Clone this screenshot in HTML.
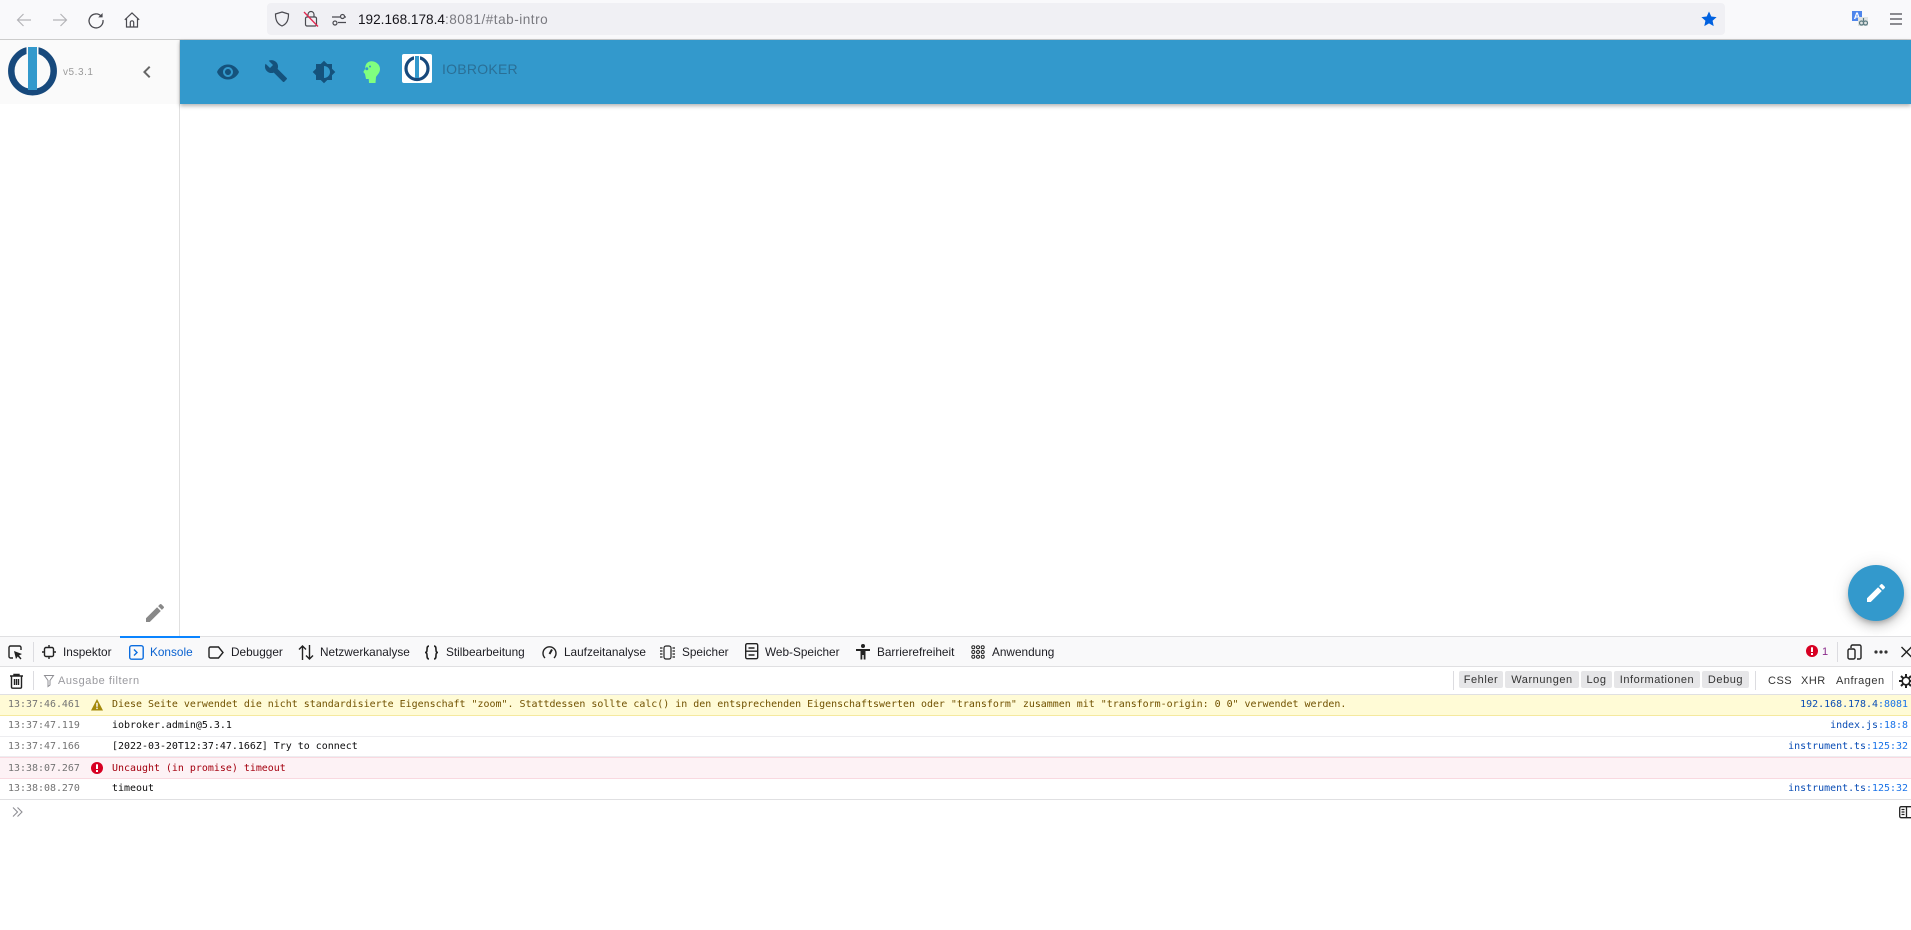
<!DOCTYPE html>
<html><head><meta charset="utf-8"><style>
html,body{margin:0;padding:0;background:#fff;width:1911px;height:930px;overflow:hidden}
body{position:relative;font-family:"Liberation Sans",sans-serif}
.a{position:absolute}
svg{position:absolute;overflow:visible}
.t{position:absolute;top:644px;font-size:11.8px;line-height:16px;color:#1c1c22;white-space:nowrap}
.f{position:absolute;top:671px;height:17px;background:#e6e6e8;border-radius:2px;font-size:11px;line-height:19px;color:#333;text-align:center;letter-spacing:.55px}
.g{position:absolute;top:673px;font-size:11px;line-height:16px;color:#333;letter-spacing:.5px;white-space:nowrap}
.s{position:absolute;width:1px;background:#dcdce0}
.r{position:absolute;left:0;width:1911px;height:20px;border-bottom:1px solid #ededf0;font-family:"DejaVu Sans Mono","Liberation Mono",monospace;font-size:9.96px;line-height:20px;white-space:pre}
.r b{font-weight:normal;position:absolute;left:8px;top:0;color:#737373}
.r i{font-style:normal;position:absolute;left:112px;top:0;color:#0c0c0d}
.r u{text-decoration:none;position:absolute;right:3px;top:0;color:#0a4db5}
.r u em{font-style:normal;color:#1a73e8}
</style></head><body>
<!-- browser toolbar -->
<div class="a" style="left:0;top:0;width:1911px;height:39px;background:#f9f9fb;border-bottom:1px solid #ccc;box-sizing:content-box"></div>
<div class="a" style="left:267px;top:3px;width:1458px;height:32px;background:#f0f0f4;border-radius:4px"></div>
<svg style="left:16px;top:12px" width="16" height="16" fill="none" stroke="#b4b4b8" stroke-width="1.2"><path d="M15 8H1.5M7.5 2L1.5 8l6 6"/></svg>
<svg style="left:52px;top:12px" width="16" height="16" fill="none" stroke="#b4b4b8" stroke-width="1.2"><path d="M1 8h13.5M8.5 2l6 6-6 6"/></svg>
<svg style="left:88px;top:12px" width="16" height="16" fill="none" stroke="#4a4a50" stroke-width="1.3"><path d="M13.5 4.5A7 7 0 1 0 15 8"/><path d="M14.6 1v4.4h-4.4" fill="#4a4a50" stroke="none"/></svg>
<svg style="left:124px;top:12px" width="16" height="16" fill="none" stroke="#4a4a50" stroke-width="1.2"><path d="M.8 7.8L8 1l7.2 6.8M2.5 6.5V15h11V6.5M6.3 15v-4.5a1.7 1.7 0 0 1 3.4 0V15"/></svg>
<svg style="left:274px;top:11px" width="16" height="16" fill="none" stroke="#4a4a50" stroke-width="1.2"><path d="M8 1l6.5 2c0 6-1.5 9.8-6.500 12C3 12.800 1.500 9 1.500 3z"/></svg>
<svg style="left:303px;top:10px" width="16" height="18" fill="none" stroke="#4a4a50" stroke-width="1.2"><rect x="2.500" y="7" width="11" height="9" rx="1.500"/><path d="M5 7V4.500a3 3 0 0 1 6 0V7"/><path d="M1 2l14 14.500" stroke="#e22850" stroke-width="1.300"/></svg>
<svg style="left:331px;top:12px" width="16" height="16" fill="none" stroke="#4a4a50" stroke-width="1.200"><circle cx="11.500" cy="4.500" r="2"/><circle cx="4" cy="11" r="2"/><path d="M1 5h8M14 5h1M7 10.500h8"/></svg>
<div class="a" style="left:358px;top:11px;font-size:13.6px;line-height:17px;color:#15141a;white-space:nowrap">192.168.178.4<span style="color:#7a7a80;letter-spacing:.5px">:8081/#tab-intro</span></div>
<svg style="left:1701px;top:11px" width="16" height="16" viewBox="0 0 16 16"><path fill="#0061e0" d="M8 .5l2.300 5 5.300.6-4 3.600 1.100 5.400L8 12.400l-4.700 2.700 1.100-5.400-4-3.600 5.300-.6z"/></svg>
<div class="a" style="left:1852px;top:11px;width:10px;height:10px;background:#4f86ec"></div>
<div class="a" style="left:1852px;top:11px;width:10px;height:10px;color:#fff;font-size:9px;line-height:10px;font-weight:bold;text-align:center">A</div>
<div class="a" style="left:1858px;top:17px;width:10px;height:9px;background:#dfe3e3"></div>
<svg style="left:1859px;top:18px" width="9" height="8" fill="none" stroke="#5b7a80" stroke-width="1.200"><circle cx="2.500" cy="5" r="2"/><circle cx="6.500" cy="5" r="2"/><path d="M4.500 0v3"/></svg>
<svg style="left:1890px;top:13px" width="13" height="12" fill="none" stroke="#4a4a50" stroke-width="1.200"><path d="M0 1h12M0 6h12M0 11h12"/></svg>
<!-- sidebar -->
<div class="a" style="left:0;top:40px;width:179px;height:64px;background:#fafafa"></div>
<div class="a" style="left:179px;top:40px;width:1px;height:596px;background:#e0e0e0"></div>
<svg style="left:0;top:40px" width="70" height="65">
<circle cx="32.500" cy="31" r="21.200" fill="none" stroke="#17497c" stroke-width="6.500"/>
<rect x="26.500" y="5" width="12" height="10" fill="#fafafa"/>
<rect x="28" y="7" width="9" height="43" fill="#3399cc"/>
</svg>
<div class="a" style="left:63px;top:67px;font-size:10px;line-height:12px;color:#9a9a9a;letter-spacing:.55px">v5.3.1</div>
<svg style="left:135px;top:60px" width="24" height="24" viewBox="0 0 24 24"><path fill="#666" d="M15.410 7.410L14 6l-6 6 6 6 1.410-1.410L10.830 12z"/></svg>
<svg style="left:143px;top:601px" width="24" height="24" viewBox="0 0 24 24"><path fill="#888" d="M3 17.250V21h3.750L17.810 9.940l-3.750-3.750L3 17.250zM20.710 7.040c.39-.39.39-1.020 0-1.410l-2.340-2.340c-.39-.39-1.020-.39-1.410 0l-1.830 1.830 3.750 3.750 1.830-1.830z"/></svg>
<!-- header -->
<div class="a" style="left:180px;top:40px;width:1731px;height:64px;background:#3399cc;box-shadow:0 2px 4px rgba(0,0,0,.3)"></div>
<svg style="left:216px;top:60px" width="24" height="24" viewBox="0 0 24 24"><path fill="#15527c" d="M12 4.500C7 4.500 2.730 7.610 1 12c1.730 4.390 6 7.500 11 7.500s9.270-3.110 11-7.500c-1.730-4.390-6-7.500-11-7.500zM12 17c-2.760 0-5-2.240-5-5s2.240-5 5-5 5 2.240 5 5-2.240 5-5 5zm0-8c-1.660 0-3 1.340-3 3s1.340 3 3 3 3-1.340 3-3-1.340-3-3-3z"/></svg>
<svg style="left:264px;top:59px" width="24" height="24" viewBox="0 0 24 24"><path fill="#15527c" d="M22.700 19l-9.100-9.100c.9-2.300.4-5-1.500-6.900-2-2-5-2.400-7.400-1.300L9 6 6 9 1.600 4.700C.4 7.100.9 10.100 2.900 12.100c1.900 1.900 4.600 2.400 6.900 1.500l9.100 9.100c.4.4 1 .4 1.400 0l2.300-2.300c.5-.4.500-1.100.1-1.400z"/></svg>
<svg style="left:312px;top:60px" width="24" height="24" viewBox="0 0 24 24"><path fill="#15527c" fill-rule="evenodd" d="M20 15.310L23.310 12 20 8.690V4h-4.690L12 .69 8.690 4H4v4.690L.69 12 4 15.310V20h4.690L12 23.310 15.310 20H20v-4.690zM12 18V6c3.310 0 6 2.690 6 6s-2.690 6-6 6z"/></svg>
<svg style="left:362px;top:60px" width="18" height="24" viewBox="0 0 18 24"><path fill="#80ff80" d="M9 1.300C13 1 18 4 18 9c0 4-3 6-4 8l-.5 6H7l-.3-4H4l-1-5-1.700-2L3 9C3 5 5 1.500 9 1.300z"/><circle cx="4.800" cy="8.700" r="1.500" fill="#3399cc"/><circle cx="8" cy="6.500" r="1" fill="#3399cc"/></svg>
<div class="a" style="left:402px;top:54px;width:30px;height:29px;background:#fff;border-radius:2px"></div>
<svg style="left:402px;top:54px" width="30" height="29">
<circle cx="15" cy="14.500" r="11" fill="none" stroke="#17497c" stroke-width="3.200"/>
<rect x="12" y="1" width="6" height="5" fill="#fff"/>
<rect x="13" y="2" width="4" height="22" fill="#3399cc"/>
</svg>
<div class="a" style="left:442px;top:61px;font-size:14px;line-height:16px;color:#2a6f96;letter-spacing:.25px">IOBROKER</div>
<!-- FAB -->
<div class="a" style="left:1848px;top:565px;width:56px;height:56px;border-radius:50%;background:#3399cc;box-shadow:0 3px 5px -1px rgba(0,0,0,.2),0 6px 10px 0 rgba(0,0,0,.14),0 1px 18px 0 rgba(0,0,0,.12)"></div>
<svg style="left:1864px;top:581px" width="24" height="24" viewBox="0 0 24 24"><path fill="#fff" d="M3 17.250V21h3.750L17.810 9.940l-3.750-3.750L3 17.250zM20.710 7.040c.39-.39.39-1.020 0-1.410l-2.340-2.340c-.39-.39-1.020-.39-1.410 0l-1.830 1.830 3.750 3.750 1.830-1.830z"/></svg>
<!-- devtools -->
<div class="a" style="left:0;top:636px;width:1911px;height:294px;background:#fff"></div>
<div class="a" style="left:0;top:636px;width:1911px;height:29px;background:#f9f9fa;border-top:1px solid #e0e0e2;border-bottom:1px solid #e0e0e2;box-sizing:content-box"></div>
<div class="a" style="left:120px;top:636px;width:80px;height:2px;background:#0a84ff"></div>
<div class="a" style="left:0;top:694px;width:1911px;height:1px;background:#e0e0e2"></div>
<div class="s" style="left:33px;top:642px;height:20px"></div>
<svg style="left:8px;top:645px" width="15" height="15" fill="none" stroke="#222" stroke-width="1.400"><path d="M5 13H2.500A1.500 1.500 0 0 1 1 11.500v-9A1.500 1.500 0 0 1 2.500 1h9A1.500 1.500 0 0 1 13 2.500V5"/><path d="M6 6l8 3-3 1.500 2.500 3-1 1-2.800-3L8 14z" fill="#222" stroke="none"/></svg>
<svg style="left:42px;top:645px" width="14" height="14" fill="none" stroke="#222" stroke-width="1.400"><rect x="2.500" y="2.500" width="9" height="9" rx="1.500"/><path d="M7 0v2.500M7 11.500V14M0 7h2.500M11.500 7H14"/></svg>
<div class="t" style="left:63px">Inspektor</div>
<svg style="left:129px;top:645px" width="15" height="15" fill="none" stroke="#0a6cdf" stroke-width="1.400"><rect x=".7" y=".7" width="13.500" height="13.500" rx="2"/><path d="M5 4.500L8 7.500l-3 3"/></svg>
<div class="t" style="left:150px;color:#0a62d0">Konsole</div>
<svg style="left:208px;top:646px" width="16" height="13" fill="none" stroke="#222" stroke-width="1.400"><path d="M2.500 1h8l4.500 5.500-4.500 5.500h-8A1.500 1.500 0 0 1 1 10.500v-8A1.500 1.500 0 0 1 2.500 1z"/></svg>
<div class="t" style="left:231px">Debugger</div>
<svg style="left:298px;top:645px" width="16" height="15" fill="none" stroke="#222" stroke-width="1.400"><path d="M4.500 15V1M1 4.500L4.500 1 8 4.500M11.500 0v14M8 10.500L11.500 14 15 10.500"/></svg>
<div class="t" style="left:320px">Netzwerkanalyse</div>
<svg style="left:424px;top:645px" width="15" height="15" fill="none" stroke="#222" stroke-width="1.600"><path d="M5 1C3 1 3 3 3 5c0 1.500-.5 2.500-2 2.500 1.500 0 2 1 2 2.500 0 2 0 4 2 4"/><path d="M10 1c2 0 2 2 2 4 0 1.500.5 2.500 2 2.500-1.500 0-2 1-2 2.500 0 2 0 4-2 4"/></svg>
<div class="t" style="left:446px">Stilbearbeitung</div>
<svg style="left:542px;top:645px" width="15" height="15" fill="none" stroke="#222" stroke-width="1.400"><path d="M3 13A6.500 6.500 0 1 1 12 13"/><path d="M7.500 9L10 4.500" stroke-width="2"/></svg>
<div class="t" style="left:564px">Laufzeitanalyse</div>
<svg style="left:660px;top:645px" width="15" height="15" fill="none" stroke="#222" stroke-width="1.200"><rect x="4" y="1" width="7" height="13" rx="2"/><path d="M0 3h2.500M0 6h2.500M0 9h2.500M0 12h2.500M12.500 3H15M12.500 6H15M12.500 9H15M12.500 12H15"/></svg>
<div class="t" style="left:682px">Speicher</div>
<svg style="left:745px;top:643px" width="14" height="16" fill="none" stroke="#222" stroke-width="1.400"><rect x=".7" y=".7" width="12" height="15" rx="1.500"/><path d="M3.500 5h6M.7 8.200h12M3.500 12h6"/></svg>
<div class="t" style="left:765px">Web-Speicher</div>
<svg style="left:856px;top:644px" width="14" height="16"><circle cx="7" cy="2" r="2" fill="#222"/><path d="M0 5h14v2H9.500v8.500H7.700V11H6.300v4.500H4.500V7H0z" fill="#222"/></svg>
<div class="t" style="left:877px">Barrierefreiheit</div>
<svg style="left:971px;top:645px" width="14" height="14" fill="none" stroke="#222" stroke-width="1"><circle cx="2.300" cy="2.300" r="1.500"/><circle cx="7" cy="2.300" r="1.500"/><circle cx="11.700" cy="2.300" r="1.500"/><circle cx="2.300" cy="7" r="1.500"/><circle cx="7" cy="7" r="1.500"/><circle cx="11.700" cy="7" r="1.500"/><circle cx="2.300" cy="11.700" r="1.500"/><circle cx="7" cy="11.700" r="1.500"/><circle cx="11.700" cy="11.700" r="1.500"/></svg>
<div class="t" style="left:992px">Anwendung</div>
<svg style="left:1806px;top:645px" width="12" height="12"><circle cx="6" cy="6" r="6" fill="#d70022"/><rect x="5" y="2.300" width="2" height="4.700" fill="#fff"/><rect x="5" y="8" width="2" height="2" fill="#fff"/></svg>
<div class="t" style="left:1822px;color:#8a2a8a;font-size:11px">1</div>
<div class="s" style="left:1837px;top:642px;height:20px"></div>
<svg style="left:1847px;top:644px" width="15" height="16" fill="none" stroke="#222" stroke-width="1.400"><path d="M4 4V2.500A1.500 1.500 0 0 1 5.500 1h7A1.500 1.500 0 0 1 14 2.500v11a1.500 1.500 0 0 1-1.500 1.500H10"/><rect x="1" y="5" width="7" height="10" rx="1.500"/></svg>
<svg style="left:1874px;top:650px" width="14" height="4" fill="#333"><circle cx="2" cy="2" r="1.600"/><circle cx="7" cy="2" r="1.600"/><circle cx="12" cy="2" r="1.600"/></svg>
<svg style="left:1901px;top:646px" width="10" height="12" fill="none" stroke="#222" stroke-width="1.400"><path d="M.5 1l10 10M10.500 1L.5 11"/></svg>
<!-- filter bar -->
<svg style="left:9px;top:673px" width="15" height="16" fill="none" stroke="#222" stroke-width="1.400"><path d="M1 3h13M5 3V1.500h5V3M2.500 3v11a1.200 1.200 0 0 0 1.200 1.200h7.600a1.200 1.200 0 0 0 1.200-1.200V3M5.500 6v6M7.500 6v6M9.500 6v6"/></svg>
<div class="s" style="left:33px;top:671px;height:19px"></div>
<svg style="left:44px;top:675px" width="10" height="12" fill="none" stroke="#8f8f94" stroke-width="1"><path d="M.5 .5h9L6 5.500V10l-2 1.500V5.500z"/></svg>
<div class="a" style="left:58px;top:673px;font-size:11px;line-height:16px;color:#9a9a9f;letter-spacing:.55px;white-space:nowrap">Ausgabe filtern</div>
<div class="s" style="left:1453px;top:671px;height:19px"></div>
<div class="f" style="left:1459px;width:44px">Fehler</div>
<div class="f" style="left:1505px;width:74px">Warnungen</div>
<div class="f" style="left:1581px;width:31px">Log</div>
<div class="f" style="left:1614px;width:86px">Informationen</div>
<div class="f" style="left:1702px;width:47px">Debug</div>
<div class="s" style="left:1755px;top:671px;height:19px"></div>
<div class="g" style="left:1768px">CSS</div>
<div class="g" style="left:1801px">XHR</div>
<div class="g" style="left:1836px">Anfragen</div>
<div class="s" style="left:1892px;top:671px;height:19px"></div>
<svg style="left:1899px;top:674px" width="14" height="14" fill="none" stroke="#222"><circle cx="7" cy="7" r="3.800" stroke-width="1.600"/><path stroke-width="2" d="M7 0v3M7 11v3M0 7h3M11 7h3M2 2l2 2M10 10l2 2M12 2l-2 2M4 10l-2 2"/></svg>
<!-- console rows -->
<div class="r" style="top:695px;background:#fffbd6;border-bottom:1px solid #f5e99f"><b>13:37:46.461</b><i style="color:#715100">Diese Seite verwendet die nicht standardisierte Eigenschaft "zoom". Stattdessen sollte calc() in den entsprechenden Eigenschaftswerten oder "transform" zusammen mit "transform-origin: 0 0" verwendet werden.</i><u>192.168.178.4<em>:8081</em></u></div>
<svg style="left:91px;top:699px" width="12" height="12"><path d="M6 0l6 11.500H0z" fill="#a4890a"/><rect x="5.300" y="3.800" width="1.400" height="4" fill="#fff"/><rect x="5.300" y="8.600" width="1.400" height="1.500" fill="#fff"/></svg>
<div class="r" style="top:716px"><b>13:37:47.119</b><i>iobroker.admin@5.3.1</i><u>index.js<em>:18:8</em></u></div>
<div class="r" style="top:737px;height:19px"><b>13:37:47.166</b><i>[2022-03-20T12:37:47.166Z] Try to connect</i><u>instrument.ts<em>:125:32</em></u></div>
<div class="r" style="top:757px;background:#fdf2f5;border-top:1px solid #f9d9e0;border-bottom:1px solid #f9d9e0;height:20px"><b style="top:1px">13:38:07.267</b><i style="color:#a4000f;top:1px">Uncaught (in promise) timeout</i></div>
<svg style="left:91px;top:762px" width="12" height="12"><circle cx="6" cy="6" r="6" fill="#d70022"/><rect x="5" y="2.300" width="2" height="4.700" fill="#fff"/><rect x="5" y="8" width="2" height="2" fill="#fff"/></svg>
<div class="r" style="top:779px;height:20px;border-bottom:1px solid #e0e0e2"><b>13:38:08.270</b><i>timeout</i><u>instrument.ts<em>:125:32</em></u></div>
<svg style="left:12px;top:807px" width="11" height="10" fill="none" stroke="#8f8f94" stroke-width="1.100"><path d="M1 .5l4.500 4.500L1 9.500M5.500 .5L10 5l-4.500 4.500"/></svg>
<svg style="left:1899px;top:806px" width="12" height="12" fill="none" stroke="#222" stroke-width="1.300"><rect x=".7" y=".7" width="13" height="11" rx="1.500"/><path d="M7.500 .7v11M2.500 3.500h3M2.500 6h3M2.500 8.500h3"/></svg>
</body></html>
